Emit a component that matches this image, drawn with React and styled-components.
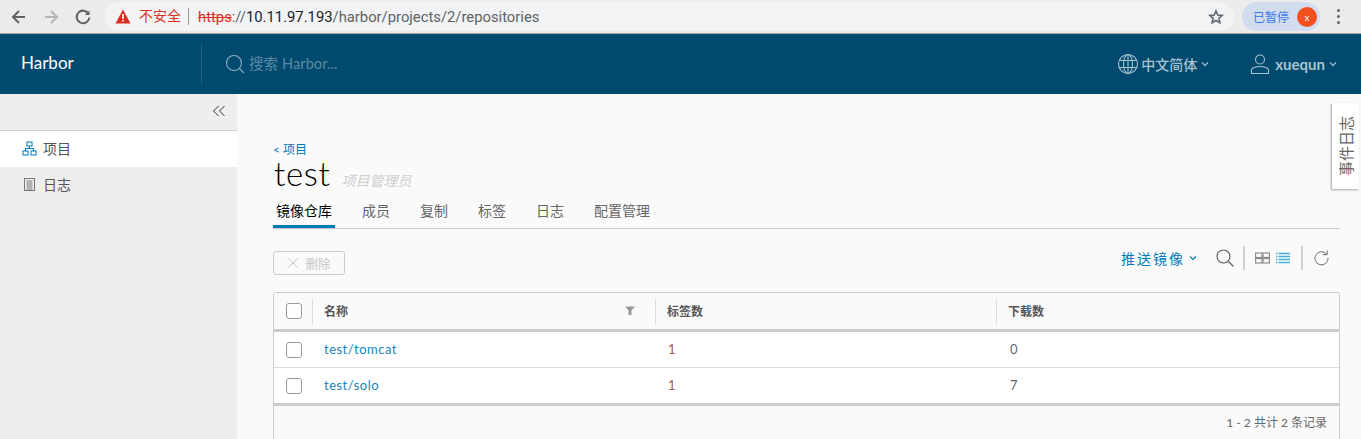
import React from 'react';
import styled, { createGlobalStyle } from 'styled-components';

const sans = `Lato, "Noto Sans CJK SC", sans-serif`;

const GlobalStyle = createGlobalStyle`
    html, body { margin: 0; padding: 0; height: 100%; overflow: hidden; }
    body { font-family: ${sans}; background: #fafafa; }
`;

const Page = styled.div`
    width: 1361px;
    height: 439px;
    display: flex;
    flex-direction: column;
    overflow: hidden;
    position: relative;
`;

/* browser chrome */
const Chrome = styled.div`
    height: 33px;
    flex: none;
    display: flex;
    align-items: center;
    background: #ebebeb;
    border-bottom: 1px solid #a4a6a8;
    padding-left: 10px;
    box-sizing: content-box;
`;
const NavIcon = styled.svg`
    width: 18px;
    height: 18px;
    flex: none;
    margin-right: ${p => p.$gap || 14}px;
    fill: none;
    stroke: ${p => p.$color || '#5f6368'};
    stroke-width: 2;
`;
const UrlPill = styled.div`
    width: 1129px;
    height: 29px;
    border-radius: 15px;
    background: #f1f3f4;
    display: flex;
    align-items: center;
    padding: 0 10px;
    box-sizing: border-box;
    font: 14.8px Roboto, "Noto Sans CJK SC", sans-serif;
    color: #5f6368;
`;
const Warning = styled.span`
    color: #d93025;
    font-size: 14px;
    margin-left: 8px;
    padding-right: 7px;
    margin-right: 9px;
    border-right: 1px solid #9a9a9a;
    line-height: 17px;
`;
const Https = styled.span`
    color: #d93025;
    text-decoration: line-through;
`;
const Host = styled.span`
    color: #202124;
`;
const Spacer = styled.div`
    flex: 1;
`;
const PausedPill = styled.div`
    width: 78px;
    height: 29px;
    margin-left: 8px;
    border-radius: 15px;
    background: #d1dcee;
    display: flex;
    align-items: center;
    justify-content: space-between;
    padding: 0 3px 0 11px;
    box-sizing: border-box;
    font-size: 12px;
    color: #3b78e7;
`;
const Avatar = styled.span`
    width: 20px;
    height: 20px;
    border-radius: 50%;
    background: #f4511e;
    color: #fff;
    font-size: 10px;
    display: flex;
    align-items: center;
    justify-content: center;
`;
const Dots = styled.div`
    margin-left: 17px;
    display: flex;
    flex-direction: column;
    gap: 3px;
    & > i { width: 3px; height: 3px; border-radius: 50%; background: #5f6368; display: block; }
`;

/* harbor header */
const Header = styled.header`
    height: 60px;
    flex: none;
    background: #004a70;
    display: flex;
    align-items: center;
    padding-right: 24px;
    color: #fff;
`;
const Brand = styled.div`
    width: 202px;
    height: 40px;
    box-sizing: border-box;
    padding-left: 21px;
    border-right: 1px solid #2a6482;
    font-size: 17px;
    line-height: 38px;
`;
const SearchBox = styled.div`
    display: flex;
    align-items: center;
    gap: 3px;
    margin-left: 22px;
    font-size: 14.5px;
    letter-spacing: 0.1px;
    line-height: 20px;
    color: #5d8aa2;
`;
const SearchLabel = styled.span`
    margin-top: -1px;
`;
const HeaderItem = styled.div`
    display: flex;
    align-items: center;
    margin-left: ${p => p.$ml}px;
    font-size: ${p => p.$bold ? 15 : 14}px;
    font-weight: ${p => p.$bold ? 700 : 500};
    color: #a9c3d1;
`;
const HeaderIcon = styled.svg`
    width: 22px;
    height: 22px;
    margin-right: ${p => p.$mr || 0}px;
    fill: none;
    stroke: ${p => p.$color || '#a9c3d1'};
    stroke-width: 1.1;
    flex: none;
`;
const Caret = styled.svg`
    width: 8px;
    height: 6px;
    margin-left: 4px;
    fill: none;
    stroke: ${p => p.$color || '#a9c3d1'};
    stroke-width: 1.1;
`;

/* body */
const Body = styled.div`
    flex: 1;
    display: flex;
    min-height: 0;
`;
const Side = styled.aside`
    width: 237px;
    flex: none;
    background: #eeeeee;
`;
const Collapse = styled.div`
    height: 37px;
    box-sizing: border-box;
    border-bottom: 1px solid #d0d0d0;
    display: flex;
    align-items: center;
    justify-content: flex-end;
    padding: 0 11px 2px 0;
`;
const NavItem = styled.div`
    height: 36px;
    display: flex;
    align-items: center;
    padding: 0 0 2px 22px;
    box-sizing: border-box;
    gap: 6px;
    font-size: 14px;
    color: #565656;
    background: ${p => p.$active ? '#ffffff' : 'transparent'};
`;
const NavGlyph = styled.svg`
    width: 15px;
    height: 15px;
    fill: none;
    stroke: ${p => p.$color};
    stroke-width: 1;
    flex: none;
`;
const Main = styled.main`
    flex: 1;
    min-width: 0;
    padding: 49px 21px 0 36px;
`;
const BackLink = styled.div`
    font-size: 12px;
    line-height: 14px;
    color: #0079b8;
`;
const TitleRow = styled.div`
    display: flex;
    align-items: baseline;
    height: 35px;
    margin-top: -1px;
`;
const Title = styled.h1`
    margin: 0;
    font-size: 33px;
    font-weight: 300;
    line-height: 35px;
    color: #000;
    letter-spacing: 0.7px;
    padding-left: 1px;
`;
const Role = styled.span`
    margin-left: 11px;
    font-size: 14px;
    font-style: italic;
    color: #cfcfcf;
`;
const Tabs = styled.nav`
    display: flex;
    height: 29px;
    margin-top: 8px;
    border-bottom: 1px solid #cccccc;
`;
const Tab = styled.div`
    padding: 0 3px;
    margin-right: 24px;
    height: ${p => p.$active ? '26px' : '29px'};
    line-height: 24px;
    font-size: 14px;
    color: ${p => p.$active ? '#000' : '#666'};
    border-bottom: ${p => p.$active ? '3px solid #0079b8' : 'none'};
`;
const Toolbar = styled.div`
    display: flex;
    align-items: center;
    height: 26px;
    margin-top: 21px;
`;
const DeleteButton = styled.button`
    width: 72px;
    height: 24px;
    border: 1px solid #cccccc;
    border-radius: 3px;
    background: transparent;
    color: #c6c6c6;
    font: 12.5px ${sans};
    display: flex;
    align-items: center;
    justify-content: center;
    gap: 6px;
    padding: 0;
`;
const ToolGroup = styled.div`
    display: flex;
    align-items: center;
    margin-left: auto;
    margin-bottom: 11px;
    padding-right: 10px;
`;
const PushButton = styled.div`
    display: flex;
    align-items: center;
    font-size: 14px;
    color: #0079b8;
    letter-spacing: 2px;
    margin-right: 18px;
`;
const ToolIcon = styled.svg`
    width: ${p => p.$w || 18}px;
    height: ${p => p.$h || 18}px;
    fill: none;
    stroke: ${p => p.$color || '#666'};
    stroke-width: ${p => p.$sw || 1};
    flex: none;
    margin-right: ${p => p.$mr || 0}px;
`;
const Sep = styled.span`
    width: 2px;
    height: 24px;
    background: #cfcfcf;
    margin: 0 ${p => p.$r}px 0 ${p => p.$l}px;
`;

/* datagrid */
const Grid = styled.div`
    margin-top: 16px;
    border: 1px solid #cccccc;
    border-bottom: none;
    border-radius: 3px 3px 0 0;
    background: #fafafa;
`;
const Row = styled.div`
    display: grid;
    grid-template-columns: 38px 343px 341px 1fr;
    height: ${p => p.$h}px;
    align-items: center;
    background: ${p => p.$head ? '#fafafa' : '#fff'};
    border-bottom: ${p => p.$bb};
`;
const CheckCell = styled.div`
    display: flex;
    justify-content: center;
    padding-left: 2px;
`;
const Check = styled.span`
    width: 14px;
    height: 14px;
    border: 1px solid #9a9a9a;
    border-radius: 3px;
    background: #fff;
    display: block;
`;
const HeadCell = styled.div`
    height: 25px;
    display: flex;
    align-items: center;
    justify-content: space-between;
    padding: 0 19px 2px 11px;
    box-sizing: border-box;
    border-left: 1px solid #dcdcdc;
    font-size: 12px;
    font-weight: 700;
    color: #565656;
`;
const Cell = styled.div`
    padding: 0 0 1px ${p => p.$pl || 12}px;
    font-size: 13px;
    color: ${p => p.$color || '#666'};
    letter-spacing: ${p => p.$track || 0}px;
`;
const Funnel = styled.svg`
    width: 10px;
    height: 10px;
    fill: #999;
    margin-right: 1px;
`;
const GridFooter = styled.div`
    height: 33px;
    display: flex;
    align-items: center;
    justify-content: flex-end;
    padding: 0 12px 2px 0;
    box-sizing: border-box;
    font-size: 12px;
    color: #666;
`;

/* overlays the content on the right edge */
const EventTab = styled.div`
    position: absolute;
    top: 103px;
    left: 1332px;
    width: 27px;
    height: 86px;
    background: #fff;
    box-shadow: 1px -1px 2px rgba(0, 0, 0, 0.35);
    writing-mode: vertical-rl;
    text-orientation: sideways;
    transform: rotate(180deg);
    display: flex;
    align-items: center;
    justify-content: center;
    font-size: 15px;
    color: #666;
`;

export default function App() {
    return (
        <Page>
            <GlobalStyle />
            <Chrome>
                <NavIcon viewBox="0 0 18 18"><path d="M15 9H3.5M9 3 3 9l6 6" /></NavIcon>
                <NavIcon viewBox="0 0 18 18" $color="#b3b5b7"><path d="M3 9h11.5M9 3l6 6-6 6" /></NavIcon>
                <NavIcon viewBox="0 0 18 18" $gap={13}><path d="M14.6 6A6.3 6.3 0 1 0 15.3 9.5" /><path d="M15.5 2.5v4.6h-4.6" fill="#5f6368" stroke="none" /></NavIcon>
                <UrlPill>
                    <svg width="16" height="15" viewBox="0 0 16 15"><path d="M8 0.5 15.5 14.5H0.5Z" fill="#d93025" /><path d="M7.2 5h1.6v5H7.2zM7.2 11h1.6v1.6H7.2z" fill="#fff" /></svg>
                    <Warning>不安全</Warning>
                    <Https>https</Https>://<Host>10.11.97.193</Host>/harbor/projects/2/repositories
                    <Spacer />
                    <svg width="16" height="16" viewBox="0 0 24 24" fill="none" stroke="#5f6368" strokeWidth="2.4"><path d="M12 3l2.8 6 6.4.7-4.8 4.3 1.4 6.4L12 17.2l-5.8 3.2 1.4-6.4L2.8 9.7 9.2 9z" /></svg>
                </UrlPill>
                <PausedPill>已暂停<Avatar>x</Avatar></PausedPill>
                <Dots><i /><i /><i /></Dots>
            </Chrome>
            <Header>
                <Brand>Harbor</Brand>
                <SearchBox>
                    <HeaderIcon viewBox="0 0 22 22" $color="#8fb0c2"><circle cx="10" cy="10" r="7.5" /><path d="m15.5 15.5 4.5 4.5" /></HeaderIcon>
                    <SearchLabel>搜索 Harbor...</SearchLabel>
                </SearchBox>
                <Spacer />
                <HeaderItem $ml={0}>
                    <HeaderIcon viewBox="0 0 22 22" $mr={2}><circle cx="11" cy="11" r="9.5" /><ellipse cx="11" cy="11" rx="4.5" ry="9.5" /><path d="M11 1.5v19M2 7.5h18M2 14.5h18" /></HeaderIcon>
                    中文简体
                    <Caret viewBox="0 0 8 6"><path d="m1 1.5 3 3 3-3" /></Caret>
                </HeaderItem>
                <HeaderItem $ml={40} $bold>
                    <HeaderIcon viewBox="0 0 22 22" $mr={4}><circle cx="11" cy="6.5" r="4.5" /><path d="M2.5 20.5v-3.5c0-2 4-3.5 8.500-3.500s8.500 1.500 8.500 3.500v3.500z" /></HeaderIcon>
                    xuequn
                    <Caret viewBox="0 0 8 6"><path d="m1 1.5 3 3 3-3" /></Caret>
                </HeaderItem>
            </Header>
            <Body>
                <Side>
                    <Collapse>
                        <ToolIcon viewBox="0 0 14 14" $w={14} $h={14} $color="#333"><path d="M6.5 2 1.500 7l5 5M12.500 2l-5 5 5 5" /></ToolIcon>
                    </Collapse>
                    <NavItem $active>
                        <NavGlyph viewBox="0 0 15 15" $color="#0079b8"><rect x="5" y="1" width="5" height="4" /><rect x="1" y="10" width="5" height="4" /><rect x="9" y="10" width="5" height="4" /><path d="M7.500 5v2.500M3.500 10V7.500h8V10" /></NavGlyph>
                        项目
                    </NavItem>
                    <NavItem>
                        <NavGlyph viewBox="0 0 15 15" $color="#777"><rect x="2.500" y="1.500" width="10" height="12" /><path d="M4.500 4h6M4.500 6h6M4.500 8h6M4.500 10h6M4.500 12h6" /></NavGlyph>
                        日志
                    </NavItem>
                </Side>
                <Main>
                    <BackLink>&lt; 项目</BackLink>
                    <TitleRow>
                        <Title>test</Title>
                        <Role>项目管理员</Role>
                    </TitleRow>
                    <Tabs>
                        <Tab $active>镜像仓库</Tab>
                        <Tab>成员</Tab>
                        <Tab>复制</Tab>
                        <Tab>标签</Tab>
                        <Tab>日志</Tab>
                        <Tab>配置管理</Tab>
                    </Tabs>
                    <Toolbar>
                        <DeleteButton disabled>
                            <svg width="12" height="12" viewBox="0 0 12 12" fill="none" stroke="#c6c6c6"><path d="m1.500 1.500 9 9M10.500 1.500l-9 9" /></svg>
                            删除
                        </DeleteButton>
                        <ToolGroup>
                            <PushButton>
                                推送镜像
                                <Caret viewBox="0 0 8 6" $color="#0079b8"><path d="m1 1.500 3 3 3-3" /></Caret>
                            </PushButton>
                            <ToolIcon viewBox="0 0 20 20" $w={20} $h={20} $color="#555" $sw={1.1}><circle cx="8.500" cy="8.500" r="6.500" /><path d="m13.500 13.500 5 5" /></ToolIcon>
                            <Sep $l={8} $r={10} />
                            <ToolIcon viewBox="0 0 15 12" $w={15} $h={12} $color="#8c8c8c" $mr={6} $sw={1.2}><rect x="0.600" y="1" width="6.400" height="4.500" /><rect x="8" y="1" width="6.400" height="4.500" /><rect x="0.600" y="6.500" width="6.400" height="4.500" /><rect x="8" y="6.500" width="6.400" height="4.500" /></ToolIcon>
                            <ToolIcon viewBox="0 0 14 12" $w={14} $h={12} $color="#49afd9" $sw={1.3}><path d="M0 1.500h1.500M2.500 1.500H14M0 4.500h1.500M2.500 4.500H14M0 7.500h1.500M2.500 7.500H14M0 10.500h1.500M2.500 10.500H14" /></ToolIcon>
                            <Sep $l={11} $r={10} />
                            <ToolIcon viewBox="0 0 18 18" $w={17} $h={17}><path d="M14.500 5.500A7 7 0 1 0 16 9.500" /><path d="M15 1.500v4.500h-4.500" /></ToolIcon>
                        </ToolGroup>
                    </Toolbar>
                    <Grid>
                        <Row $head $h={36} $bb="3px solid #cccccc">
                            <CheckCell><Check /></CheckCell>
                            <HeadCell>名称<Funnel viewBox="0 0 10 10"><path d="M0 1.500h10L6.500 5.500V10h-3V5.500z" /></Funnel></HeadCell>
                            <HeadCell>标签数</HeadCell>
                            <HeadCell>下载数</HeadCell>
                        </Row>
                        <Row $h={35} $bb="1px solid #dddddd">
                            <CheckCell><Check /></CheckCell>
                            <Cell $color="#1585bd" $track={0.5}>test/tomcat</Cell>
                            <Cell $color="#a5594f" $pl={13}>1</Cell>
                            <Cell $pl={14}>0</Cell>
                        </Row>
                        <Row $h={35} $bb="3px solid #cccccc">
                            <CheckCell><Check /></CheckCell>
                            <Cell $color="#1585bd" $track={0.5}>test/solo</Cell>
                            <Cell $color="#a5594f" $pl={13}>1</Cell>
                            <Cell $pl={14}>7</Cell>
                        </Row>
                        <GridFooter>1 - 2 共计 2 条记录</GridFooter>
                    </Grid>
                </Main>
            </Body>
            <EventTab>事件日志</EventTab>
        </Page>
    );
}
